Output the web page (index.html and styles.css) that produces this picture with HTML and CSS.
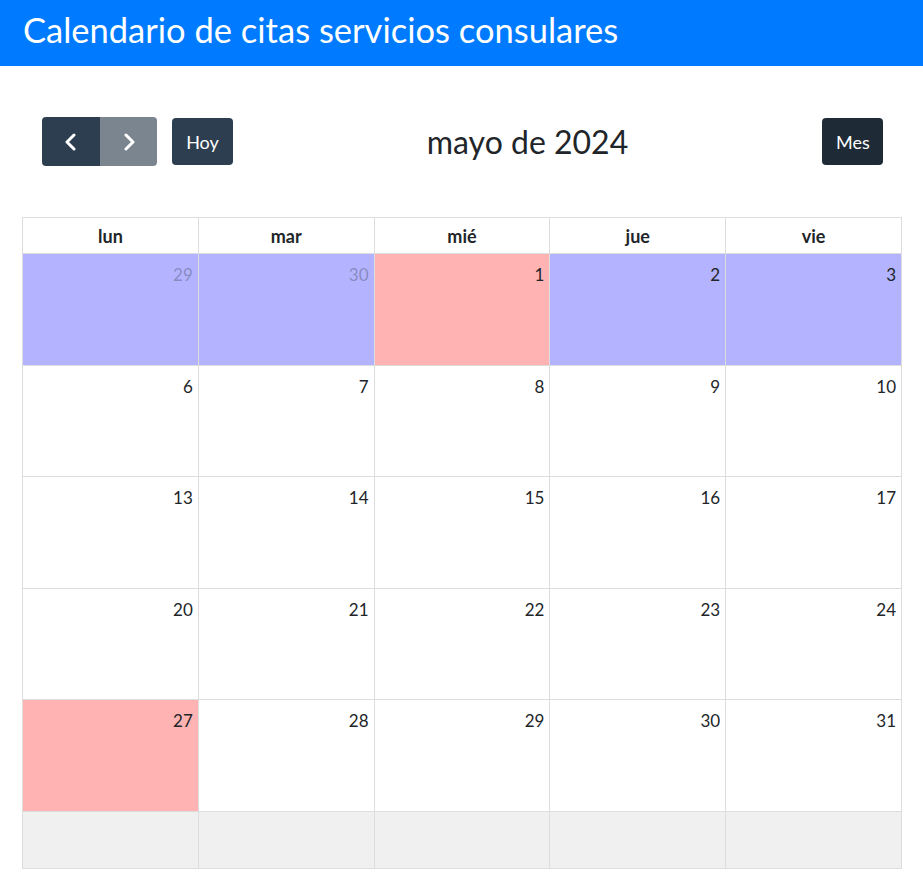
FILE: index.html
```html
<!DOCTYPE html>
<html lang="es">
<head>
  <title>Calendario de citas servicios consulares</title>
  <meta charset="UTF-8">
  <meta name="viewport" content="width=device-width, initial-scale=1">
  <link rel="stylesheet" href="styles.css">
</head>
<body>
  <div class="header">
    <h1>Calendario de citas servicios consulares</h1>
  </div>
  <div class="main">
    <div class="toolbar">
      <div class="toolbar-left">
        <div class="btn-group">
          <button class="btn btn-prev" aria-label="anterior">
            <svg width="14" height="18" viewBox="0 0 14 18"><path d="M10 2 L3 9 L10 16" fill="none" stroke="#fff" stroke-width="3" stroke-linecap="round" stroke-linejoin="round"/></svg>
          </button>
          <button class="btn btn-next" aria-label="siguiente">
            <svg width="14" height="18" viewBox="0 0 14 18"><path d="M4 2 L11 9 L4 16" fill="none" stroke="#fff" stroke-width="3" stroke-linecap="round" stroke-linejoin="round"/></svg>
          </button>
        </div>
        <button class="btn btn-today">Hoy</button>
      </div>
      <h2 class="title">mayo de 2024</h2>
      <div class="toolbar-right">
        <button class="btn btn-active">Mes</button>
      </div>
    </div>

    <div class="calendar">
      <div class="head">lun</div>
      <div class="head">mar</div>
      <div class="head">mié</div>
      <div class="head">jue</div>
      <div class="head">vie</div>

      <div class="day blue other">29</div>
      <div class="day blue other">30</div>
      <div class="day pink">1</div>
      <div class="day blue">2</div>
      <div class="day blue">3</div>

      <div class="day">6</div>
      <div class="day">7</div>
      <div class="day">8</div>
      <div class="day">9</div>
      <div class="day">10</div>

      <div class="day">13</div>
      <div class="day">14</div>
      <div class="day">15</div>
      <div class="day">16</div>
      <div class="day">17</div>

      <div class="day">20</div>
      <div class="day">21</div>
      <div class="day">22</div>
      <div class="day">23</div>
      <div class="day">24</div>

      <div class="day pink">27</div>
      <div class="day">28</div>
      <div class="day">29</div>
      <div class="day">30</div>
      <div class="day">31</div>

      <div class="day empty"></div>
      <div class="day empty"></div>
      <div class="day empty"></div>
      <div class="day empty"></div>
      <div class="day empty"></div>
    </div>
  </div>
</body>
</html>
```

FILE: styles.css
```css
/* Base */
body {
  font-family: Lato, "Noto Sans", sans-serif;
  margin: 0;
  color: #212529;
  background: #fff;
}

/* Header */
.header {
  background: #007bff;
  color: #fff;
  height: 66px;
  padding: 0 23px;
  display: flex;
  align-items: center;
}

.header h1 {
  margin: 0;
  font-size: 34.5px;
  font-weight: 400;
  padding-bottom: 8px;
}

/* Main */
.main {
  padding: 51px 21px 0 22px;
}

/* Toolbar */
.toolbar {
  display: flex;
  align-items: center;
  justify-content: space-between;
  padding: 0 19px 0 20px;
  height: 49px;
  margin-bottom: 51px;
}

.toolbar-left {
  display: flex;
  align-items: center;
  gap: 15px;
}

.toolbar-right {
  display: flex;
}

.title {
  margin: 0;
  font-size: 32px;
  font-weight: 400;
}

.btn {
  font-family: inherit;
  font-size: 18px;
  color: #fff;
  border: none;
  border-radius: 4px;
  height: 47px;
  padding: 0 14px;
  background: #2c3e50;
  cursor: pointer;
}

.btn-group {
  display: flex;
  height: 49px;
}

.btn-group .btn {
  height: 49px;
  display: flex;
  align-items: center;
  justify-content: center;
}

.btn-prev {
  width: 58px;
  border-radius: 4px 0 0 4px;
}

.btn-next {
  width: 57px;
  border-radius: 0 4px 4px 0;
  background: #7b8590;
}

.btn-today {
  width: 61px;
}

.btn-active {
  width: 61px;
  background: #1e2b37;
}

/* Calendar grid */
.calendar {
  display: grid;
  grid-template-columns: repeat(5, 1fr);
  grid-template-rows: 36px repeat(5, 111.6px) 57px;
  border-top: 1px solid #ddd;
  border-left: 1px solid #ddd;
}

.head,
.day {
  border-right: 1px solid #ddd;
  border-bottom: 1px solid #ddd;
}

.head {
  font-weight: 700;
  font-size: 18px;
  text-align: center;
  line-height: 36px;
}

.day {
  font-size: 17px;
  text-align: right;
  padding: 10px 5px 0 0;
}

.blue {
  background: #b3b3ff;
}

.pink {
  background: #ffb3b3;
}

.other {
  color: rgba(33, 37, 41, 0.3);
}

.empty {
  background: #f0f0f0;
}
```
